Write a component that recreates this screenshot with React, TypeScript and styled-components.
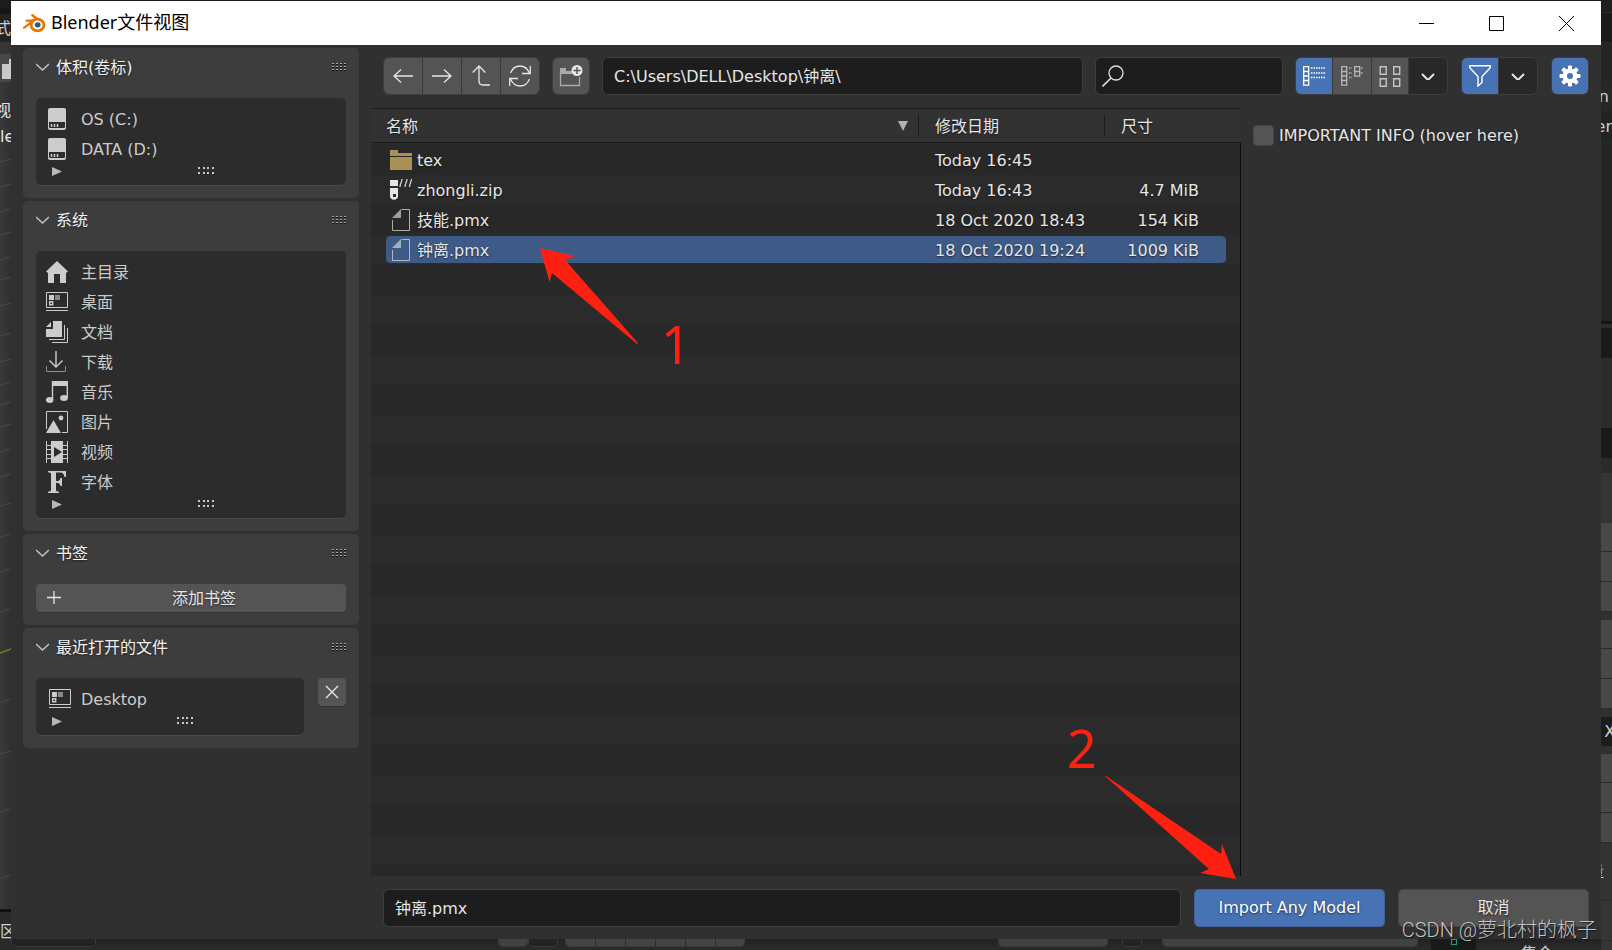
import React from "react";
import styled, { createGlobalStyle, css } from "styled-components";

const GlobalStyle = createGlobalStyle`
  *, *::before, *::after { box-sizing: border-box; }
  body {
    margin: 0;
    background: #2b2b2b;
    color: #e6e6e6;
    font: 16px/21px "DejaVu Sans", "Noto Sans CJK SC", sans-serif;
  }
  button, input { font: inherit; color: inherit; margin: 0; }
  button { padding: 0; border: 0; cursor: pointer; }
  svg { display: block; flex: none; }
`;

/* ---------- shell ---------- */

const Desktop = styled.div`
  position: relative;
  display: grid;
  grid-template: 1px 1fr 11px / 11px minmax(0, 1fr) 11px;
  min-height: 100vh;
  overflow: hidden;
  background: #1c1c1c;
`;

const SideStrip = styled.div<{ $side: "left" | "right" }>`
  grid-row: 1 / 4;
  grid-column: ${(p) => (p.$side === "left" ? 1 : 3)};
  display: flex;
  flex-direction: column;
  height: 100vh;
  overflow: hidden;
`;

const Segment = styled.div<{ $h?: number; $bg: string; $end?: boolean; $line?: boolean }>`
  display: flex;
  align-items: center;
  justify-content: ${(p) => (p.$end ? "flex-end" : "flex-start")};
  flex: ${(p) => (p.$h ? `0 0 ${p.$h}px` : "1 0 0")};
  min-height: 0;
  overflow: hidden;
  white-space: nowrap;
  color: #d0d0d0;
  background: ${(p) => p.$bg};
  ${(p) => p.$line && css`border-bottom: 1px solid #2b2b2b;`}
`;

const Viewport = styled.div`
  position: relative;
  display: flex;
  flex-direction: column;
  flex: 1;
  overflow: hidden;
  padding-top: 16px;
  line-height: 26px;
  background: linear-gradient(90deg, #393939, #303030);
  svg { position: absolute; inset: 0; }
  span { position: relative; }
  span:first-of-type { align-self: flex-end; }
`;

const BottomStrip = styled.div`
  grid-row: 3;
  grid-column: 2;
  display: flex;
  min-width: 0;
  overflow: hidden;
  background: linear-gradient(#222, #2b2b2b);
`;

const Spacer = styled.div<{ $w?: number }>`
  flex: ${(p) => (p.$w ? `0 0 ${p.$w}px` : "1")};
`;

const Pill = styled.div<{ $w: number; $dark?: boolean; $split?: boolean }>`
  flex: 0 0 ${(p) => p.$w}px;
  height: 8px;
  border: 1px solid #3a3a3a;
  border-top: 0;
  border-radius: 0 0 5px 5px;
  background: ${(p) =>
    p.$split
      ? "repeating-linear-gradient(90deg, #444 0 29px, #2a2a2a 29px 30px)"
      : p.$dark
        ? "#222"
        : "#424242"};
`;

const OutlinerEdge = styled.div`
  flex: 0 0 45px;
  display: flex;
  justify-content: center;
  background: #191919;
  &::before {
    content: "";
    width: 6px;
    height: 6px;
    border: 1px solid #14a07c;
  }
`;

const CutLabel = styled.span`
  flex: none;
  width: 80px;
  padding-top: 4px;
  color: #ccc;
`;

const Window = styled.main`
  grid-row: 2;
  grid-column: 2;
  display: flex;
  flex-direction: column;
  min-width: 0;
  background: #303030;
`;

/* ---------- title bar ---------- */

const TitleBar = styled.header`
  display: flex;
  align-items: center;
  height: 44px;
  padding-left: 12px;
  background: #fff;
  color: #000;
`;

const WindowTitle = styled.h1`
  flex: 1;
  margin: 0 0 2px 5px;
  font: 400 18px/24px "Noto Sans", "Noto Sans CJK SC", sans-serif;
`;

const CaptionButton = styled.button`
  display: grid;
  place-items: center;
  width: 70px;
  height: 44px;
  background: none;
`;

/* ---------- sidebar ---------- */

const Body = styled.div`
  display: grid;
  grid-template-columns: 360px minmax(0, 1fr);
  flex: 1;
`;

const Sidebar = styled.aside`
  display: flex;
  flex-direction: column;
  gap: 3px;
  padding: 3px 12px;
`;

const Panel = styled.section`
  padding: 0 13px 13px;
  border-radius: 5px;
  background: #3d3d3d;
`;

const PanelHead = styled.button`
  display: flex;
  align-items: center;
  width: 100%;
  height: 38px;
  margin-bottom: 12px;
  background: none;
  text-align: left;
  text-shadow: 0 1px 2px #0008;
  color: #f2f2f2;
  span { flex: 1; margin-left: 7px; }
`;

const PanelRow = styled.div`
  display: flex;
  align-items: flex-start;
  gap: 14px;
`;

const ListBox = styled.div`
  flex: 1;
  padding-top: 6px;
  border-radius: 5px;
  background: #2c2c2c;
  box-shadow: 0 1px 0 #4a4a4a;
`;

const List = styled.ul`
  margin: 0;
  padding: 0;
  list-style: none;
`;

const PlaceLink = styled.a<{ $nested?: boolean }>`
  display: flex;
  align-items: center;
  gap: ${(p) => (p.$nested ? 10 : 13)}px;
  height: 30px;
  padding-left: ${(p) => (p.$nested ? 13 : 10)}px;
  color: #cbcbcb;
  text-decoration: none;
`;

const ListFoot = styled.div`
  display: grid;
  grid-template-columns: 29px 1fr;
  align-items: center;
  height: 21px;
  padding-bottom: 7px;
  svg:first-child { margin-left: 16px; }
  svg:last-child { justify-self: center; }
`;

const AddButton = styled.button`
  display: flex;
  align-items: center;
  width: 100%;
  height: 28px;
  padding-left: 11px;
  border-radius: 4px;
  background: #545454;
  box-shadow: 0 1px 0 #333;
  text-shadow: 0 1px 2px #0008;
  span { flex: 1; }
`;

const SquareButton = styled.button`
  display: grid;
  place-items: center;
  width: 28px;
  height: 28px;
  border-radius: 4px;
  background: #545454;
  box-shadow: 0 1px 0 #333;
`;

/* ---------- toolbar ---------- */

const Main = styled.div`
  display: flex;
  flex-direction: column;
  min-width: 0;
`;

const Toolbar = styled.div`
  display: flex;
  align-items: center;
  gap: 12px;
  height: 63px;
  padding: 0 12px 1px 12px;
`;

const ButtonGroup = styled.div`
  display: flex;
  flex: none;
  height: 38px;
  overflow: hidden;
  border: 1px solid #3d3d3d;
  border-radius: 6px;
  background: #3a3a3a;
  gap: 1px;
`;

const ToolButton = styled.button<{ $tone?: "active" | "dark"; $wide?: boolean }>`
  display: grid;
  place-items: center;
  width: ${(p) => (p.$wide ? 38 : 36)}px;
  height: 36px;
  color: #e6e6e6;
  background: ${(p) =>
    p.$tone === "active" ? "#4772b3" : p.$tone === "dark" ? "#282828" : "#545454"};
`;

const ToolGap = styled.div`
  display: flex;
  gap: 13px;
`;

const field = css`
  height: 38px;
  border: 1px solid #3d3d3d;
  border-radius: 6px;
  background: #1d1d1d;
  outline: none;
`;

const TextField = styled.input`
  ${field}
  flex: 480 1 0;
  min-width: 0;
  padding: 0 11px 2px;
`;

const SearchField = styled.label`
  ${field}
  flex: 189 1 0;
  min-width: 0;
  display: flex;
  align-items: center;
  padding-left: 6px;
  input {
    flex: 1;
    min-width: 0;
    border: 0;
    outline: none;
    background: none;
  }
`;

/* ---------- file list ---------- */

const Content = styled.div`
  display: grid;
  grid-template-columns: minmax(0, 1fr) 360px;
  flex: 1;
`;

const FileArea = styled.div`
  padding: 0 15px;
  background:
    linear-gradient(#0c0c0c, #0c0c0c) 100% 35px / 1px 100% no-repeat,
    linear-gradient(#1c1c1c 0 1px, #323232 1px 34px, #1c1c1c 34px 35px) 0 0 / 100% 35px no-repeat,
    repeating-linear-gradient(#282828 0 30px, #2b2b2b 30px 60px) 0 37px;
`;

const FileTable = styled.table`
  width: 100%;
  table-layout: fixed;
  border-collapse: separate;
  border-spacing: 0;
  text-shadow: 0 1px 2px #0009;
  th {
    height: 37px;
    padding: 0 0 0 17px;
    font-weight: 400;
    text-align: left;
    background: linear-gradient(#1c1c1c, #1c1c1c) 0 7px / 1px 20px no-repeat;
  }
  th:first-child { padding-left: 0; background: none; }
`;

const HeadCell = styled.div`
  display: flex;
  align-items: center;
  justify-content: space-between;
  padding-right: 10px;
`;

const FileRow = styled.tr<{ $selected?: boolean }>`
  td {
    height: 30px;
    padding: 1px 0 0 17px;
    border: solid transparent;
    border-width: 1px 0 2px;
    background: ${(p) => (p.$selected ? "#3e5a87" : "transparent")};
    background-clip: padding-box;
    white-space: nowrap;
  }
  td:first-child { padding-left: 4px; border-radius: 5px 0 0 5px; }
  td:last-child { padding: 1px 27px 0 0; border-radius: 0 5px 5px 0; text-align: right; }
`;

const FileName = styled.div`
  display: flex;
  align-items: center;
  gap: 5px;
`;

const Options = styled.aside`
  padding: 16px 12px;
`;

const CheckLabel = styled.label`
  display: flex;
  align-items: center;
  gap: 5px;
  height: 22px;
  text-shadow: 0 1px 2px #0009;
  white-space: nowrap;
  input {
    appearance: none;
    width: 21px;
    height: 21px;
    border: 1px solid #454545;
    border-radius: 4px;
    background: #545454;
  }
`;

const Footer = styled.footer`
  display: flex;
  align-items: center;
  gap: 13px;
  height: 63px;
  padding: 0 12px;
`;

const ActionButton = styled.button<{ $primary?: boolean }>`
  flex: none;
  width: 191px;
  height: 38px;
  border: 1px solid ${(p) => (p.$primary ? "#41609a" : "#454545")};
  border-radius: 5px;
  background: ${(p) => (p.$primary ? "#4772b3" : "#545454")};
  color: ${(p) => (p.$primary ? "#fff" : "#e6e6e6")};
  text-shadow: 0 1px 2px #0009;
`;

/* ---------- annotations over the dialog ---------- */

const StepOne = styled.div`
  position: absolute;
  left: 540px;
  top: 248px;
  color: #ff2012;
`;

const StepTwo = styled.div`
  position: absolute;
  right: 376px;
  bottom: 70px;
  color: #ff2012;
`;

const StepNumber = styled.span<{ $x: number; $y: number }>`
  position: absolute;
  left: ${(p) => p.$x}px;
  top: ${(p) => p.$y}px;
  font: 52px/60px "Noto Sans", sans-serif;
`;

const Watermark = styled.div`
  position: absolute;
  right: 15px;
  bottom: 8px;
  color: #c4c4c4;
  font: 300 20px/24px Roboto, "Noto Sans CJK SC", sans-serif;
  text-shadow: 1px 1px 1px #0009;
  pointer-events: none;
`;

/* ---------- icons ---------- */

type IconProps = { w?: number; h?: number; children: React.ReactNode };
const Icon = ({ w = 22, h = 22, children }: IconProps) => (
  <svg width={w} height={h} viewBox={`0 0 ${w} ${h}`} fill="none" aria-hidden="true">
    {children}
  </svg>
);

const BlenderLogo = () => (
  <svg width="23" height="19" viewBox="0 0 23 19" aria-hidden="true">
    <path
      d="M1.2 13.6 10.5 6.6H3.6M9.4 1.2l9 6.8"
      fill="none"
      stroke="#ea7600"
      strokeWidth="2.4"
      strokeLinecap="round"
      strokeLinejoin="round"
    />
    <ellipse cx="14.5" cy="11" rx="6.4" ry="5.8" fill="#fff" stroke="#ea7600" strokeWidth="2.8" />
    <ellipse cx="14.7" cy="10.8" rx="2.9" ry="2.6" fill="#1f5a95" />
  </svg>
);

const Chevron = () => (
  <Icon w={13} h={9}>
    <path d="M0 1l6.500 6L13 1" stroke="#c4c4c4" strokeWidth="1.500" />
  </Icon>
);

const HeadGrip = () => (
  <Icon w={14} h={9}>
    {[0, 4, 8, 12].map((x) => (
      <g key={x} shapeRendering="crispEdges">
        <path d={`M${x} 0h2v1h-2zM${x} 3h2v1h-2zM${x} 6h2v1h-2z`} fill="#a8a8a8" />
        <path d={`M${x} 1h2v1h-2zM${x} 4h2v1h-2zM${x} 7h2v1h-2z`} fill="#111" />
      </g>
    ))}
  </Icon>
);

const FootGrip = () => (
  <Icon w={16} h={8}>
    {[0, 5, 9, 14].map((x) => (
      <path key={x} d={`M${x} 0h2v2h-2zM${x} 5h2v2h-2z`} fill="#c8c8c8" />
    ))}
  </Icon>
);

const Play = () => (
  <Icon w={10} h={9}>
    <path d="M0 0l10 4.500L0 9z" fill="#b8b8b8" />
  </Icon>
);

const C = "#cccccc";

const DriveIcon = () => (
  <Icon>
    <rect x="2" width="18" height="22" rx="2" fill={C} />
    <path d="M3 14h16v5a1 1 0 0 1-1 1H4a1 1 0 0 1-1-1z" fill="#2c2c2c" />
    <path d="M5.500 16v3M8.500 16v3M11.500 16v3" stroke={C} strokeWidth="1.500" />
  </Icon>
);

const HomeIcon = () => (
  <Icon>
    <path d="M11 0l11 10.500-2 1.500V22h-6v-9H8v9H2V12l-2-1.500z" fill={C} />
  </Icon>
);

const DesktopIcon = () => (
  <Icon h={20}>
    <path d="M.5.5h21v15H.5zM0 18.500h22" stroke={C} />
    <path d="M3 3h5v5H3z" fill={C} />
    <path d="M9 3h5v5H9z" fill="#888" />
    <path d="M3.700 9.700h3v3h-3z" stroke={C} strokeWidth="1.400" />
  </Icon>
);

const DocumentsIcon = () => (
  <Icon>
    <path d="M7 0h9v16H0V8h7zM5 1v5H0z" fill={C} />
    <path d="M18.500 4v14.500H3M21.500 7v14.500H6" stroke={C} />
  </Icon>
);

const DownloadIcon = () => (
  <Icon>
    <path d="M10 0v16M3.500 9.500L10 16l6.500-6.500" stroke={C} strokeWidth="1.400" />
    <path d="M.5 15v5.500h19V15" stroke="#8c8c8c" />
  </Icon>
);

const MusicIcon = () => (
  <Icon>
    <path d="M6.500 19V.700h14.800V17M6.500 3.500h15" stroke={C} strokeWidth="1.400" />
    <path d="M6 0h16v5H6z" fill={C} />
    <ellipse cx="3.700" cy="19" rx="3.700" ry="2.900" fill={C} />
    <ellipse cx="18" cy="17" rx="3.900" ry="2.900" fill={C} />
  </Icon>
);

const PictureIcon = () => (
  <Icon>
    <path d="M.5 18V.5h21v21H16" stroke={C} />
    <path d="M0 22l7.500-13L15 22z" fill={C} />
    <circle cx="15" cy="7" r="2.400" fill={C} />
  </Icon>
);

const VideoIcon = () => (
  <Icon>
    <path d="M5 0h12v22H5z" fill={C} />
    <path d="M.5 0v22M21.500 0v22" stroke={C} />
    <path d="M1 4.500h4M1 8.500h4M1 13.500h4M1 17.500h4M17 4.500h4M17 8.500h4M17 13.500h4M17 17.500h4" stroke={C} />
    <path d="M8 6l8 5-8 5z" fill="#2c2c2c" />
  </Icon>
);

const FontIcon = () => (
  <Icon>
    <path d="M2 0h18v6h-1.500c-.5-3-1.500-4.500-4.500-4.500H10V10c3 0 4-.5 4.500-3H16v8h-1.500c-.5-2.500-1.500-3.200-4.500-3.200V19c0 1.300.8 1.600 3 1.800V22H2v-1.200c2-.2 3-.5 3-1.800V3c0-1.300-1-1.600-3-1.800z" fill={C} />
  </Icon>
);

const FolderIcon = () => (
  <Icon h={20}>
    <path d="M0 0h8v3h14v3H0zM0 7h22v13H0z" fill="#a99155" />
  </Icon>
);

const ZipIcon = () => (
  <Icon>
    <path d="M0 1h8v6H0zM0 9h8v8c0 5-8 5-8 0z" fill="#e6e6e6" />
    <path d="M3 15h3v3H3z" fill="#2b2b2b" />
    <path d="M12 0c0 3-2 4-2 8M17 0c0 3-2 4-2 8M21.500 0c0 3-2 4-2 8" stroke="#ddd" strokeWidth="1.200" />
  </Icon>
);

const FileIcon = () => (
  <Icon>
    <path d="M2.500 11v10.500h17V.5h-8" stroke="#d0d0d0" strokeOpacity=".8" />
    <path d="M11 0v9H2z" fill="#d0d0d0" fillOpacity=".7" />
  </Icon>
);

const ArrowIcon = ({ flip }: { flip?: boolean }) => (
  <Icon w={20} h={16}>
    <path
      d={flip ? "M0 8h19M12 1.500L19 8l-7 6.500" : "M20 8H1M8 1.500L1 8l7 6.500"}
      stroke="#e6e6e6"
      strokeWidth="1.300"
    />
  </Icon>
);

const ParentIcon = () => (
  <Icon w={18}>
    <path d="M7 1v15q0 4 4 4h7M.7 7.500L7 1l6.300 6.500" stroke="#e6e6e6" strokeWidth="1.300" />
  </Icon>
);

const RefreshIcon = () => (
  <Icon>
    <path
      d="M1.500 8C3.500 3 7 1 11 1c4 0 7.500 2.500 9.500 7M21.300 1v7.500H13M20.500 14c-2 5-5.500 7-9.500 7-4 0-7.500-2.500-9.500-7M.7 21v-7.500H9"
      stroke="#e6e6e6"
      strokeWidth="1.300"
    />
  </Icon>
);

const NewFolderIcon = () => (
  <Icon w={24}>
    <path d="M1.500 8v12.500h19V12" stroke="#aaa" strokeWidth="1.300" />
    <path d="M1 3h6v3h6v3H1z" fill="#aaa" />
    <circle cx="18" cy="5.500" r="5.500" fill="#e6e6e6" />
    <path d="M18 2v7M14.500 5.500h7" stroke="#545454" strokeWidth="1.400" />
  </Icon>
);

const SearchIcon = () => (
  <Icon>
    <circle cx="14" cy="8" r="7" stroke="#e0e0e0" strokeWidth="1.300" />
    <path d="M9 13l-8.500 8.500" stroke="#e0e0e0" strokeWidth="1.600" />
  </Icon>
);

const VerticalListIcon = () => (
  <Icon h={20}>
    <path d="M.7.700h5v18.500h-5zM0 5.500h6M0 10h6M0 14.500h6" stroke="#fff" strokeWidth="1.300" />
    <path d="M8 2h14M8 7h14M8 11.500h14" stroke="#fff" strokeWidth="1.500" strokeDasharray="1.500 1" />
  </Icon>
);

const HorizontalListIcon = () => (
  <Icon h={20}>
    <path
      d="M.7.700h5v18.500h-5zM0 5.500h6M0 10h6M0 14.500h6M13.700.700h5v9.500h-5zM13 5.500h6"
      stroke="#b8b8b8"
      strokeWidth="1.300"
    />
    <path d="M8 2h3M8 7h3M8 11.500h3M20 2h2M20 7h2" stroke="#b8b8b8" strokeWidth="1.500" strokeDasharray="1.500 1" />
  </Icon>
);

const ThumbnailIcon = () => (
  <Icon h={21}>
    <path d="M1.200.7h6v7.500h-6zM14.700.7h6v7.500h-6zM1.200 12.700h6v7.500h-6zM14.700 12.700h6v7.500h-6z" stroke="#c4c4c4" strokeWidth="1.400" />
  </Icon>
);

const DropIcon = () => (
  <Icon w={14} h={7}>
    <path d="M1 1l6 6 6-6" stroke="#e6e6e6" strokeWidth="2" />
  </Icon>
);

const FilterIcon = () => (
  <Icon>
    <path d="M.8.8h20.400v2L13 11.500v6L9 21V11.500L.8 2.800z" stroke="#fff" strokeWidth="1.400" />
  </Icon>
);

const GearIcon = () => (
  <Icon>
    <g fill="#fff">
      {[0, 45, 90, 135].map((a) => (
        <rect key={a} x="9" y=".5" width="4" height="21" rx="1" transform={`rotate(${a} 11 11)`} />
      ))}
      <circle cx="11" cy="11" r="7.500" />
    </g>
    <circle cx="11" cy="11" r="3" fill="#4772b3" />
  </Icon>
);

/* ---------- data ---------- */

const volumes = [
  { label: "OS (C:)", icon: <DriveIcon /> },
  { label: "DATA (D:)", icon: <DriveIcon /> },
];

const system = [
  { label: "主目录", icon: <HomeIcon /> },
  { label: "桌面", icon: <DesktopIcon /> },
  { label: "文档", icon: <DocumentsIcon /> },
  { label: "下载", icon: <DownloadIcon /> },
  { label: "音乐", icon: <MusicIcon /> },
  { label: "图片", icon: <PictureIcon /> },
  { label: "视频", icon: <VideoIcon /> },
  { label: "字体", icon: <FontIcon /> },
];

const recent = [{ label: "Desktop", icon: <DesktopIcon /> }];

const files = [
  { name: "tex", date: "Today 16:45", size: "", icon: <FolderIcon /> },
  { name: "zhongli.zip", date: "Today 16:43", size: "4.7 MiB", icon: <ZipIcon /> },
  { name: "技能.pmx", date: "18 Oct 2020 18:43", size: "154 KiB", icon: <FileIcon /> },
  { name: "钟离.pmx", date: "18 Oct 2020 19:24", size: "1009 KiB", icon: <FileIcon />, selected: true },
];

/* ---------- composed parts ---------- */

const SidePanel = ({ title, children }: { title: string; children: React.ReactNode }) => (
  <Panel>
    <PanelHead>
      <Chevron />
      <span>{title}</span>
      <HeadGrip />
    </PanelHead>
    {children}
  </Panel>
);

const Places = ({ items, nested }: { items: typeof volumes; nested?: boolean }) => (
  <ListBox>
    <List>
      {items.map((i) => (
        <li key={i.label}>
          <PlaceLink href="#" $nested={nested}>
            {i.icon}
            {i.label}
          </PlaceLink>
        </li>
      ))}
    </List>
    <ListFoot>
      <Play />
      <FootGrip />
    </ListFoot>
  </ListBox>
);

const LeftBackdrop = () => (
  <SideStrip $side="left" aria-hidden="true">
    <Segment $h={8} $bg="#1c1c1c" />
    <Segment $h={6} $bg="#161616" />
    <Segment $h={28} $bg="#232323" $end>模式</Segment>
    <Segment $h={12} $bg="#353535" />
    <Segment $h={28} $bg="#484848" $end>
      <Icon w={9} h={22}>
        <path d="M0 7h7v15H0zM7 2h2v20H7z" fill="#c8c8c8" />
      </Icon>
    </Segment>
    <Viewport>
      <svg width="11" height="827" viewBox="0 0 11 827" fill="none">
        {[80, 105, 130, 153, 178, 198, 224, 254, 280, 303, 323, 345, 370, 395, 424, 455, 490, 530, 620, 672, 730, 796].map((y) => (
          <path key={y} d={`M0 ${y}l11-3`} stroke="#4a4a4a" />
        ))}
        <path d="M0 571l11-4" stroke="#5d8a1c" strokeWidth="1.500" />
      </svg>
      <span>视</span>
      <span>le</span>
    </Viewport>
    <Segment $h={3} $bg="#101010" />
    <Segment $h={38} $bg="#2a2a2a">区</Segment>
  </SideStrip>
);

const RightBackdrop = () => (
  <SideStrip $side="right" aria-hidden="true">
    <Segment $h={13} $bg="#1f1f1f" $line />
    <Segment $h={30} $bg="#1b1b1b" $line />
    <Segment $h={38} $bg="#242424" />
    <Segment $h={30} $bg="#272727" $end>n&thinsp;</Segment>
    <Segment $h={30} $bg="#232323" $end>er</Segment>
    <Segment $h={180} $bg="#252525" />
    <Segment $h={3} $bg="#141414" />
    <Segment $h={4} $bg="#2d2d2d" />
    <Segment $h={30} $bg="#1a1a1a" />
    <Segment $h={70} $bg="#2c2c2c" />
    <Segment $h={30} $bg="#1a1a1a" />
    <Segment $h={15} $bg="#2a2a2a" />
    <Segment $h={50} $bg="#353535" />
    <Segment $h={29} $bg="#484848" $line />
    <Segment $h={30} $bg="#484848" $line />
    <Segment $h={30} $bg="#484848" $line />
    <Segment $h={8} $bg="#303030" />
    <Segment $h={29} $bg="#484848" $line />
    <Segment $h={30} $bg="#484848" $line />
    <Segment $h={30} $bg="#484848" $line />
    <Segment $h={8} $bg="#303030" />
    <Segment $h={29} $bg="#1c1c1c">&thinsp;X</Segment>
    <Segment $h={8} $bg="#303030" />
    <Segment $h={29} $bg="#484848" $line />
    <Segment $h={30} $bg="#484848" $line />
    <Segment $h={30} $bg="#484848" $line />
    <Segment $h={58} $bg="#333" $line $end>量&ensp;</Segment>
    <Segment $h={40} $bg="#353535" $line />
    <Segment $bg="#353535" />
  </SideStrip>
);

export default function App() {
  return (
    <>
      <GlobalStyle />
      <Desktop>
        <LeftBackdrop />
        <Window>
          <TitleBar>
            <BlenderLogo />
            <WindowTitle>Blender文件视图</WindowTitle>
            <CaptionButton aria-label="Minimize">
              <Icon w={15} h={15}><path d="M0 7.500h15" stroke="#000" /></Icon>
            </CaptionButton>
            <CaptionButton aria-label="Maximize">
              <Icon w={15} h={15}><path d="M.5.500h14v14H.5z" stroke="#000" /></Icon>
            </CaptionButton>
            <CaptionButton aria-label="Close">
              <Icon w={15} h={15}><path d="M0 0l15 15M15 0L0 15" stroke="#000" /></Icon>
            </CaptionButton>
          </TitleBar>

          <Body>
            <Sidebar>
              <SidePanel title="体积(卷标)">
                <Places items={volumes} />
              </SidePanel>
              <SidePanel title="系统">
                <Places items={system} />
              </SidePanel>
              <SidePanel title="书签">
                <AddButton>
                  <Icon w={15} h={15}><path d="M7 0v13M0 6.500h14" stroke="#e6e6e6" strokeWidth="1.300" /></Icon>
                  <span>添加书签</span>
                </AddButton>
              </SidePanel>
              <SidePanel title="最近打开的文件">
                <PanelRow>
                  <Places items={recent} nested />
                  <SquareButton aria-label="Clear recent">
                    <Icon w={14} h={14}><path d="M1 1l12 12M13 1L1 13" stroke="#e6e6e6" strokeWidth="1.400" /></Icon>
                  </SquareButton>
                </PanelRow>
              </SidePanel>
            </Sidebar>

            <Main>
              <Toolbar>
                <ButtonGroup>
                  <ToolButton $wide aria-label="Back"><ArrowIcon /></ToolButton>
                  <ToolButton $wide aria-label="Forward"><ArrowIcon flip /></ToolButton>
                  <ToolButton $wide aria-label="Parent directory"><ParentIcon /></ToolButton>
                  <ToolButton $wide aria-label="Refresh"><RefreshIcon /></ToolButton>
                </ButtonGroup>
                <ButtonGroup>
                  <ToolButton aria-label="New folder"><NewFolderIcon /></ToolButton>
                </ButtonGroup>
                <TextField aria-label="Directory" defaultValue={"C:\\Users\\DELL\\Desktop\\钟离\\"} />
                <SearchField>
                  <SearchIcon />
                  <input type="search" aria-label="Search" />
                </SearchField>
                <ToolGap>
                  <ButtonGroup>
                    <ToolButton $tone="active" aria-label="Vertical list"><VerticalListIcon /></ToolButton>
                    <ToolButton $wide aria-label="Horizontal list"><HorizontalListIcon /></ToolButton>
                    <ToolButton aria-label="Thumbnails"><ThumbnailIcon /></ToolButton>
                    <ToolButton $tone="dark" $wide aria-label="Display settings"><DropIcon /></ToolButton>
                  </ButtonGroup>
                  <ButtonGroup>
                    <ToolButton $tone="active" aria-label="Filter"><FilterIcon /></ToolButton>
                    <ToolButton $tone="dark" $wide aria-label="Filter settings"><DropIcon /></ToolButton>
                  </ButtonGroup>
                  <ButtonGroup>
                    <ToolButton $tone="active" aria-label="Toggle options"><GearIcon /></ToolButton>
                  </ButtonGroup>
                </ToolGap>
              </Toolbar>

              <Content>
                <FileArea>
                  <FileTable>
                    <colgroup>
                      <col />
                      <col width="186" />
                      <col width="122" />
                    </colgroup>
                    <thead>
                      <tr>
                        <th scope="col">
                          <HeadCell>
                            名称
                            <Icon w={10} h={12}><path d="M0 0h10L5 10z" fill="#b0b0b0" /></Icon>
                          </HeadCell>
                        </th>
                        <th scope="col">修改日期</th>
                        <th scope="col">尺寸</th>
                      </tr>
                    </thead>
                    <tbody>
                      {files.map((f) => (
                        <FileRow key={f.name} $selected={f.selected}>
                          <td>
                            <FileName>
                              {f.icon}
                              {f.name}
                            </FileName>
                          </td>
                          <td>{f.date}</td>
                          <td>{f.size}</td>
                        </FileRow>
                      ))}
                    </tbody>
                  </FileTable>
                </FileArea>
                <Options>
                  <CheckLabel>
                    <input type="checkbox" />
                    IMPORTANT INFO (hover here)
                  </CheckLabel>
                </Options>
              </Content>

              <Footer>
                <TextField aria-label="File name" defaultValue="钟离.pmx" />
                <ActionButton $primary>Import Any Model</ActionButton>
                <ActionButton>取消</ActionButton>
              </Footer>
            </Main>
          </Body>
        </Window>

        <BottomStrip aria-hidden="true">
          <Pill $w={85} $dark />
          <Spacer $w={402} />
          <Pill $w={30} />
          <Pill $w={30} $dark />
          <Spacer $w={7} />
          <Pill $w={180} $split />
          <Spacer />
          <Pill $w={110} />
          <Spacer $w={14} />
          <Pill $w={20} $dark />
          <Spacer $w={20} />
          <Pill $w={256} />
          <Spacer $w={13} />
          <OutlinerEdge />
          <Spacer $w={45} />
          <CutLabel>集合</CutLabel>
        </BottomStrip>

        <RightBackdrop />

        <StepOne>
          <Icon w={100} h={97}>
            <path d="M0 0l35 8-10 4 73 83-1 1L12 25 9.500 34z" fill="currentColor" />
          </Icon>
          <StepNumber $x={121} $y={66}>1</StepNumber>
        </StepOne>
        <StepTwo>
          <Icon w={131} h={104}>
            <path d="M0 0l1 0 115 78 1-10 14 35-36-6 9-4z" fill="currentColor" />
          </Icon>
          <StepNumber $x={-38} $y={-58}>2</StepNumber>
        </StepTwo>
        <Watermark>CSDN @萝北村的枫子</Watermark>
      </Desktop>
    </>
  );
}
